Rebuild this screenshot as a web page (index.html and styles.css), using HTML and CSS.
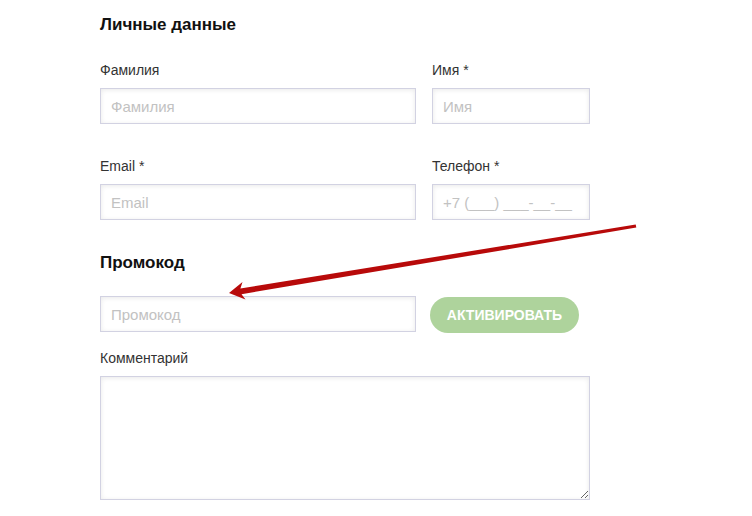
FILE: index.html
```html
<!DOCTYPE html>
<html lang="ru">
<head>
    <meta charset="UTF-8">
    <meta name="viewport" content="width=device-width, initial-scale=1.0">
    <title>Оформление заказа</title>
    <link rel="stylesheet" href="styles.css">
</head>
<body>
    <div class="order-form">
        <h2 class="section-title">Личные данные</h2>

        <div class="row row-first">
            <div class="field">
                <label class="field-label">Фамилия</label>
                <input class="input" type="text" placeholder="Фамилия">
            </div>
            <div class="field">
                <label class="field-label">Имя *</label>
                <input class="input" type="text" placeholder="Имя">
            </div>
        </div>

        <div class="row">
            <div class="field">
                <label class="field-label">Email *</label>
                <input class="input" type="text" placeholder="Email">
            </div>
            <div class="field">
                <label class="field-label">Телефон *</label>
                <input class="input" type="text" placeholder="+7 (___) ___-__-__">
            </div>
        </div>

        <h2 class="section-title promo-title">Промокод</h2>

        <div class="promo-row">
            <input class="input" type="text" placeholder="Промокод">
            <button class="btn-activate">Активировать</button>
        </div>

        <div class="field comment-field">
            <label class="field-label">Комментарий</label>
            <textarea class="input textarea"></textarea>
        </div>
    </div>

    <!-- стрелка-указатель поверх формы -->
    <svg class="pointer-arrow" width="752" height="516" viewBox="0 0 752 516">
        <polygon fill="#b80a0a" points="229,293 242.5,282 240.4,288.4 635.7,224.5 636.3,227.6 241.5,294.2 245.5,299.5"/>
    </svg>
</body>
</html>
```

FILE: styles.css
```css
body {
    margin: 0;
    background: #fff;
    font-family: "Liberation Sans", Arial, sans-serif;
    color: #333;
}

.order-form {
    width: 490px;
    padding-left: 100px;
}

.section-title {
    margin: 15px 0 0;
    font-size: 17px;
    line-height: 20px;
    font-weight: bold;
    color: #111;
}

.promo-title {
    margin-top: 33px;
}

.row {
    display: grid;
    grid-template-columns: 316px 158px;
    column-gap: 16px;
    margin-top: 33px;
}

.row-first {
    margin-top: 26px;
}

.field {
    display: flex;
    flex-direction: column;
    gap: 9px;
}

.field-label {
    font-size: 14px;
    line-height: 18px;
    color: #333;
}

.input {
    box-sizing: border-box;
    width: 100%;
    height: 36px;
    padding: 0 10px;
    border: 1px solid #d2d2e2;
    background: #fff;
    box-shadow: inset 0 1px 5px rgba(0, 0, 0, 0.09);
    font-family: "Liberation Sans", Arial, sans-serif;
    font-size: 15px;
    color: #333;
    outline: none;
}

.input::placeholder {
    color: #c2c2c2;
}

.promo-row {
    display: flex;
    align-items: center;
    gap: 14px;
    margin-top: 22px;
}

.promo-row .input {
    width: 316px;
}

.btn-activate {
    width: 149px;
    height: 36px;
    margin-top: 2px;
    border: none;
    border-radius: 18px;
    background: #aed39c;
    color: #fff;
    font-family: "Liberation Sans", Arial, sans-serif;
    font-size: 14px;
    font-weight: bold;
    text-transform: uppercase;
    cursor: pointer;
}

.comment-field {
    margin-top: 16px;
    gap: 9px;
}

.textarea {
    height: 124px;
    padding: 8px 10px;
    resize: vertical;
}

.pointer-arrow {
    position: absolute;
    left: 0;
    top: 0;
    pointer-events: none;
}
```
